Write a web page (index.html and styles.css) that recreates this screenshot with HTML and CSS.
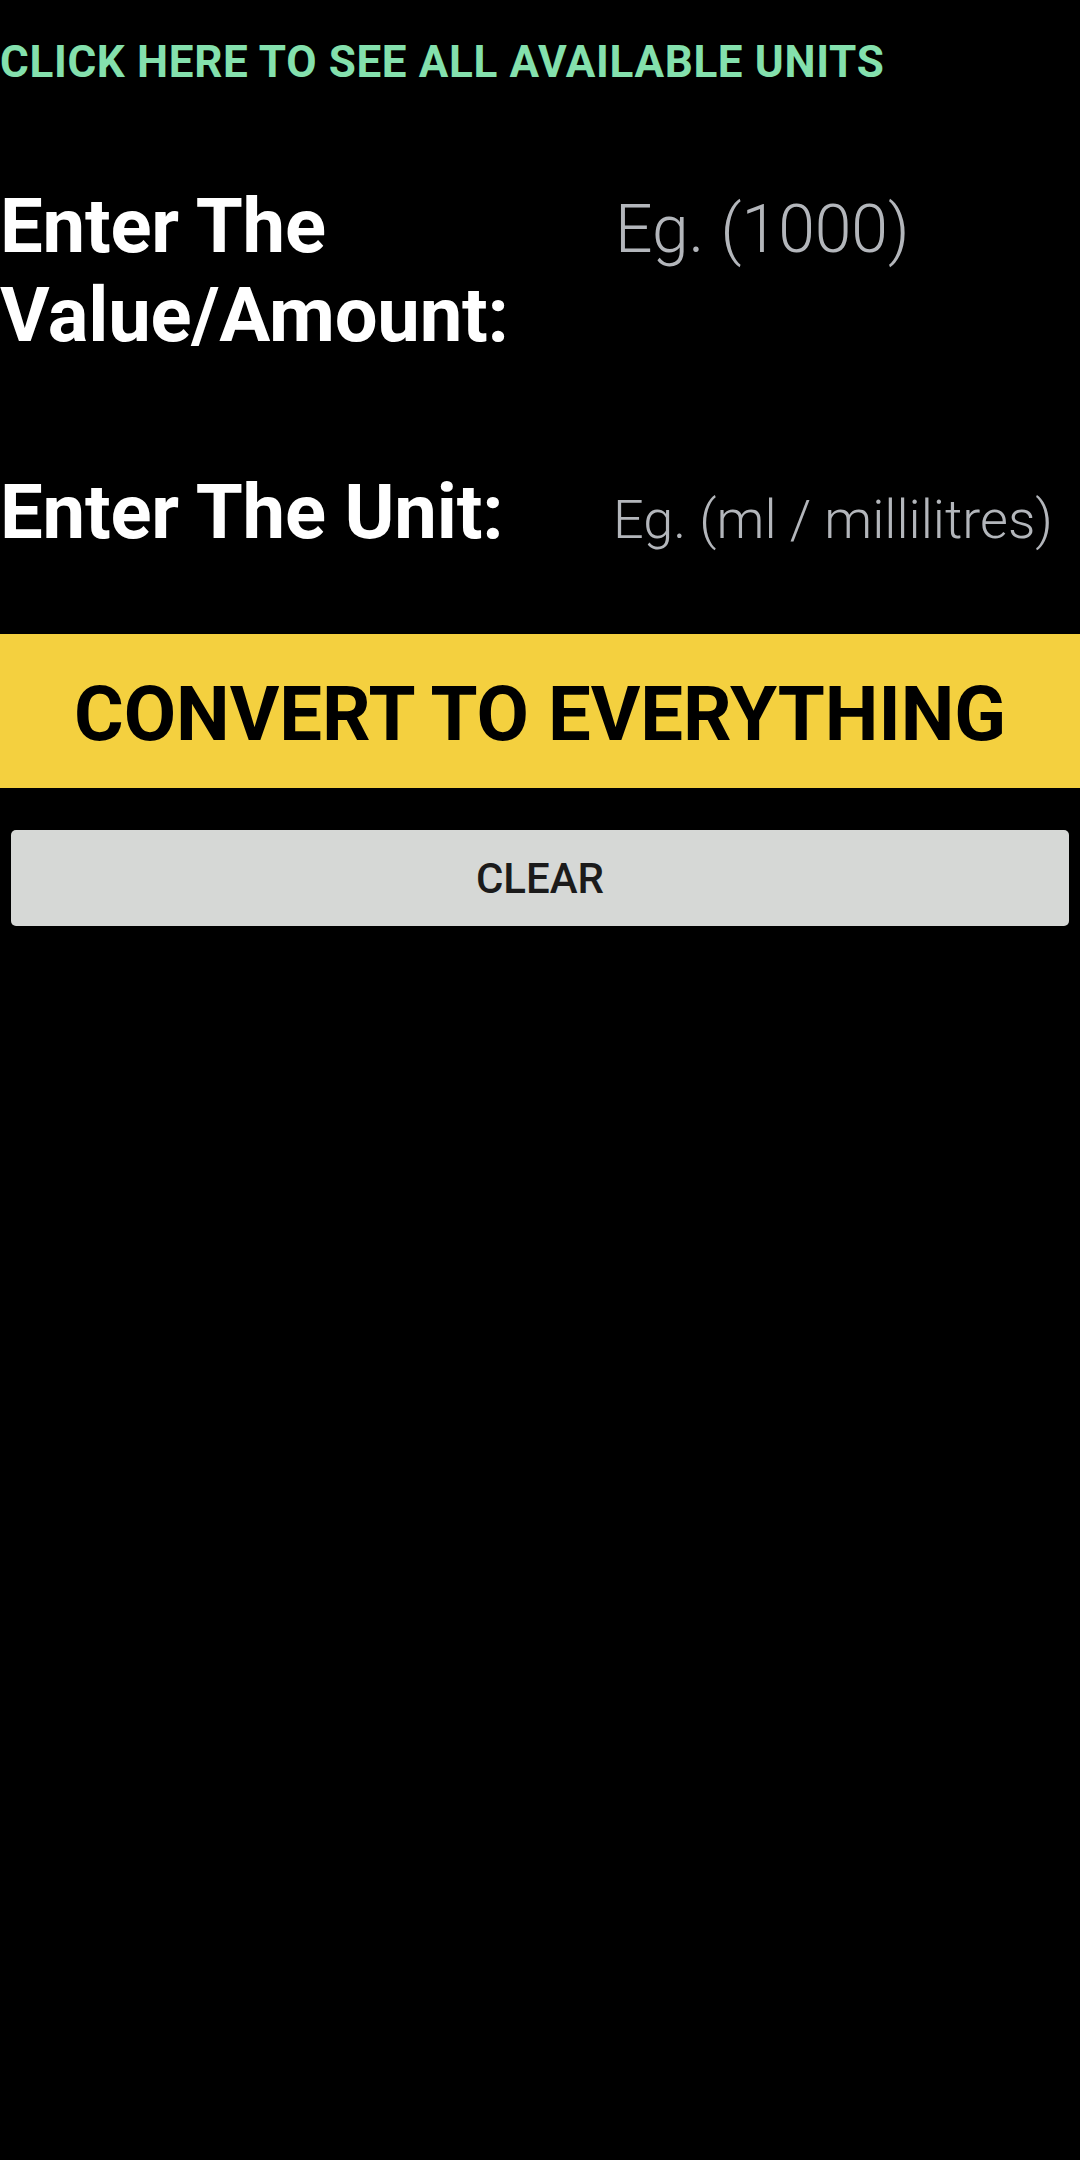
FILE: index.html
```html
<!DOCTYPE html>
<html lang="en">
<head>
<meta charset="utf-8">
<title>Unit Converter</title>
<link rel="stylesheet" href="styles.css">
</head>
<body>
<main class="screen">
  <a class="units-link" href="#">CLICK HERE TO SEE ALL AVAILABLE UNITS</a>

  <div class="field-row field-value">
    <label class="field-label" for="amount">Enter The <span class="nowrap">Value/Amount:</span></label>
    <input class="field-input input-value" id="amount" type="text" placeholder="Eg. (1000)">
  </div>

  <div class="field-row field-unit">
    <label class="field-label" for="unit">Enter The Unit:</label>
    <input class="field-input input-unit" id="unit" type="text" placeholder="Eg. (ml / millilitres)">
  </div>

  <button class="convert-btn" type="button">CONVERT TO EVERYTHING</button>

  <div class="clear-wrap">
    <button class="clear-btn" type="button">CLEAR</button>
  </div>
</main>
</body>
</html>
```

FILE: styles.css
```css
html, body {
  margin: 0;
  padding: 0;
  background: #000;
}

body {
  width: 1080px;
  min-height: 2160px;
  font-family: Roboto, "Liberation Sans", sans-serif;
  color: #fff;
}

.screen {
  display: flex;
  flex-direction: column;
}

.units-link {
  display: block;
  padding-top: 36px;
  font-size: 44px;
  line-height: 52px;
  font-weight: 700;
  letter-spacing: 0.65px;
  color: #84e0ad;
  text-decoration: none;
  white-space: nowrap;
}

.field-row {
  display: grid;
  grid-template-columns: 600px 1fr;
  align-items: baseline;
}

.field-value {
  margin-top: 94px;
}

.field-unit {
  margin-top: 108px;
}

.field-label {
  font-size: 76px;
  line-height: 89px;
  font-weight: 700;
  letter-spacing: -0.2px;
  color: #fff;
}

.nowrap {
  white-space: nowrap;
}

.field-input {
  width: 100%;
  box-sizing: border-box;
  background: transparent;
  border: none;
  outline: none;
  padding: 0;
  margin: 0;
  font-family: Roboto, "Liberation Sans", sans-serif;
  font-weight: 300;
  color: #fff;
}

.field-input::placeholder {
  color: #b3b6bb;
  opacity: 1;
}

.input-value {
  font-size: 66px;
  line-height: 78px;
  padding-left: 15px;
}

.input-unit {
  font-size: 54px;
  line-height: 64px;
  padding-left: 13px;
}

.convert-btn {
  display: block;
  width: 100%;
  margin-top: 77px;
  padding: 36px 0 29px;
  border: none;
  background: #f4d03f;
  color: #000;
  font-family: Roboto, "Liberation Sans", sans-serif;
  font-size: 76px;
  line-height: 89px;
  font-weight: 700;
  text-align: center;
}

.clear-wrap {
  padding: 42px 11px 0;
}

.clear-btn {
  display: flex;
  align-items: center;
  justify-content: center;
  width: 100%;
  height: 96px;
  border: none;
  border-radius: 5px;
  background: #d6d8d6;
  color: #1b1b1b;
  font-family: Roboto, "Liberation Sans", sans-serif;
  font-size: 42px;
  font-weight: 500;
  padding: 0;
}
```
